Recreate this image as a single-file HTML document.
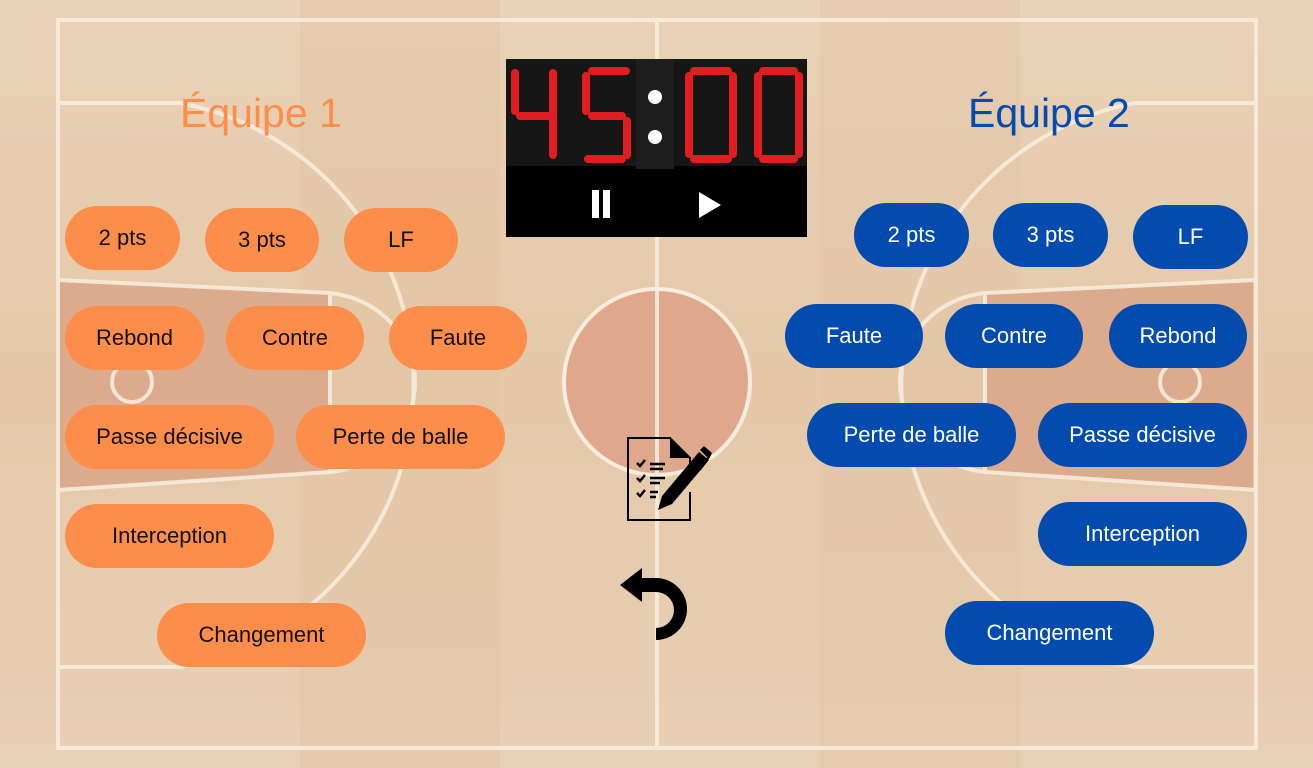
<!DOCTYPE html>
<html><head><meta charset="utf-8"><style>
body{margin:0;width:1313px;height:768px;overflow:hidden;background:#e6cdb0;font-family:"Liberation Sans",sans-serif;position:relative}
.b{position:absolute;height:64px;border-radius:32px;display:flex;align-items:center;justify-content:center;font-size:22px}
.o{background:#fd8d4a;color:#111}
.u{background:#034bae;color:#fff}
.t{position:absolute;font-size:41px;top:90px}
</style></head><body>
<svg width="1313" height="768" style="position:absolute;left:0;top:0">
<defs><linearGradient id="g" x1="0" x2="0" y1="0" y2="1">
<stop offset="0" stop-color="#e9d2b7"/><stop offset="0.5" stop-color="#e4c8a8"/><stop offset="1" stop-color="#e8d0b5"/></linearGradient></defs>
<rect width="1313" height="768" fill="url(#g)"/>
<rect x="300" y="0" width="200" height="768" fill="#e0c3a2" opacity="0.45"/>
<rect x="820" y="0" width="200" height="768" fill="#e0c3a2" opacity="0.35"/>
<path d="M60 280 L330 293 V472 L60 490Z" fill="#d9a286" opacity="0.8"/>
<path d="M1253 280 L985 293 V472 L1253 490Z" fill="#d9a286" opacity="0.8"/>
<circle cx="657" cy="382" r="93" fill="#dfa88c" stroke="#f8ecdc" stroke-width="4"/>
<g fill="none" stroke="#f8ecdc" stroke-width="4" opacity="0.9">
<rect x="58" y="20" width="1198" height="728"/>
<line x1="657" y1="20" x2="657" y2="748"/>
<path d="M58 280 L330 293 V472 L58 490"/>
<path d="M1256 280 L985 293 V472 L1256 490"/>
<path d="M330 293 A95 90 0 0 1 330 472"/>
<path d="M985 293 A95 90 0 0 0 985 472"/>
<circle cx="132" cy="382" r="20"/><circle cx="1180" cy="382" r="20"/>
<path d="M58 103 H180 A287 287 0 0 1 180 667 H58"/>
<path d="M1256 103 H1135 A287 287 0 0 0 1135 667 H1256"/>
</g>
</svg>
<div class="t" style="left:180px;color:#fd8d4a">Équipe 1</div>
<div class="t" style="left:968px;color:#034bae">Équipe 2</div>

<div style="position:absolute;left:506px;top:59px;width:301px;height:178px;background:#000">
<div style="position:absolute;left:0;top:0;width:130px;height:107px;background:#161616"></div>
<div style="position:absolute;left:130px;top:0;width:38px;height:110px;background:#1e1e1e"></div>
<div style="position:absolute;left:168px;top:0;width:133px;height:107px;background:#161616"></div>
<svg style="position:absolute;left:0;top:0" width="301" height="110">
<g fill="none" stroke="#e01e22" stroke-width="8" stroke-linecap="round" stroke-linejoin="round">
<path d="M9 14V52M14 57H42M47 14V96"/>
<path d="M120 12H86M80 17V52M86 57H116M121 62V96M116 100H82"/>
<path d="M188 12H222M227 17V95M222 100H188M183 95V17"/>
<path d="M257 12H288M293 17V95M288 100H257M252 95V17"/>
</g>
<circle cx="149" cy="38" r="7" fill="#fff"/><circle cx="149" cy="78" r="7" fill="#fff"/>
</svg>
<div style="position:absolute;left:86px;top:131px;width:7px;height:28px;background:#fff"></div>
<div style="position:absolute;left:97px;top:131px;width:7px;height:28px;background:#fff"></div>
<svg style="position:absolute;left:193px;top:133px" width="24" height="26"><path d="M0 0L22 13L0 26Z" fill="#fff"/></svg>
</div>

<svg style="position:absolute;left:620px;top:430px" width="100" height="100" viewBox="0 0 100 100">
<path d="M70 62V90H8V8H50L70 28V40" fill="none" stroke="#000" stroke-width="2"/>
<path d="M50 8V28H70Z" fill="#000"/>
<g stroke="#000" stroke-width="2.5" fill="none">
<path d="M17 33l3 3 5-6M17 48l3 3 5-6M17 63l3 3 5-6"/>
<path d="M30 34H45M30 39H43M30 48H45M30 53H40M30 62H38M30 67H36"/>
</g>
<path d="M38 80L42 66L79 22L89 30L52 74Z" fill="#000"/>
<path d="M80 20L84 16L92 23L89 29Z" fill="#000"/>
<path d="M88 28L80 40" stroke="#000" stroke-width="2"/>
</svg>
<svg style="position:absolute;left:620px;top:568px" width="74" height="74" viewBox="0 0 74 74">
<path d="M0 17L22 0V10H36A26 26 0 0 1 36 72V60A14 14 0 0 0 36 24H22V34Z" fill="#000"/>
</svg>

<div class="b o" style="left:65px;top:206px;width:115px">2 pts</div>
<div class="b o" style="left:205px;top:208px;width:114px">3 pts</div>
<div class="b o" style="left:344px;top:208px;width:114px">LF</div>
<div class="b o" style="left:65px;top:306px;width:139px">Rebond</div>
<div class="b o" style="left:226px;top:306px;width:138px">Contre</div>
<div class="b o" style="left:389px;top:306px;width:138px">Faute</div>
<div class="b o" style="left:65px;top:405px;width:209px">Passe décisive</div>
<div class="b o" style="left:296px;top:405px;width:209px">Perte de balle</div>
<div class="b o" style="left:65px;top:504px;width:209px">Interception</div>
<div class="b o" style="left:157px;top:603px;width:209px">Changement</div>

<div class="b u" style="left:854px;top:203px;width:115px">2 pts</div>
<div class="b u" style="left:993px;top:203px;width:115px">3 pts</div>
<div class="b u" style="left:1133px;top:205px;width:115px">LF</div>
<div class="b u" style="left:785px;top:304px;width:138px">Faute</div>
<div class="b u" style="left:945px;top:304px;width:138px">Contre</div>
<div class="b u" style="left:1109px;top:304px;width:138px">Rebond</div>
<div class="b u" style="left:807px;top:403px;width:209px">Perte de balle</div>
<div class="b u" style="left:1038px;top:403px;width:209px">Passe décisive</div>
<div class="b u" style="left:1038px;top:502px;width:209px">Interception</div>
<div class="b u" style="left:945px;top:601px;width:209px">Changement</div>
</body></html>
